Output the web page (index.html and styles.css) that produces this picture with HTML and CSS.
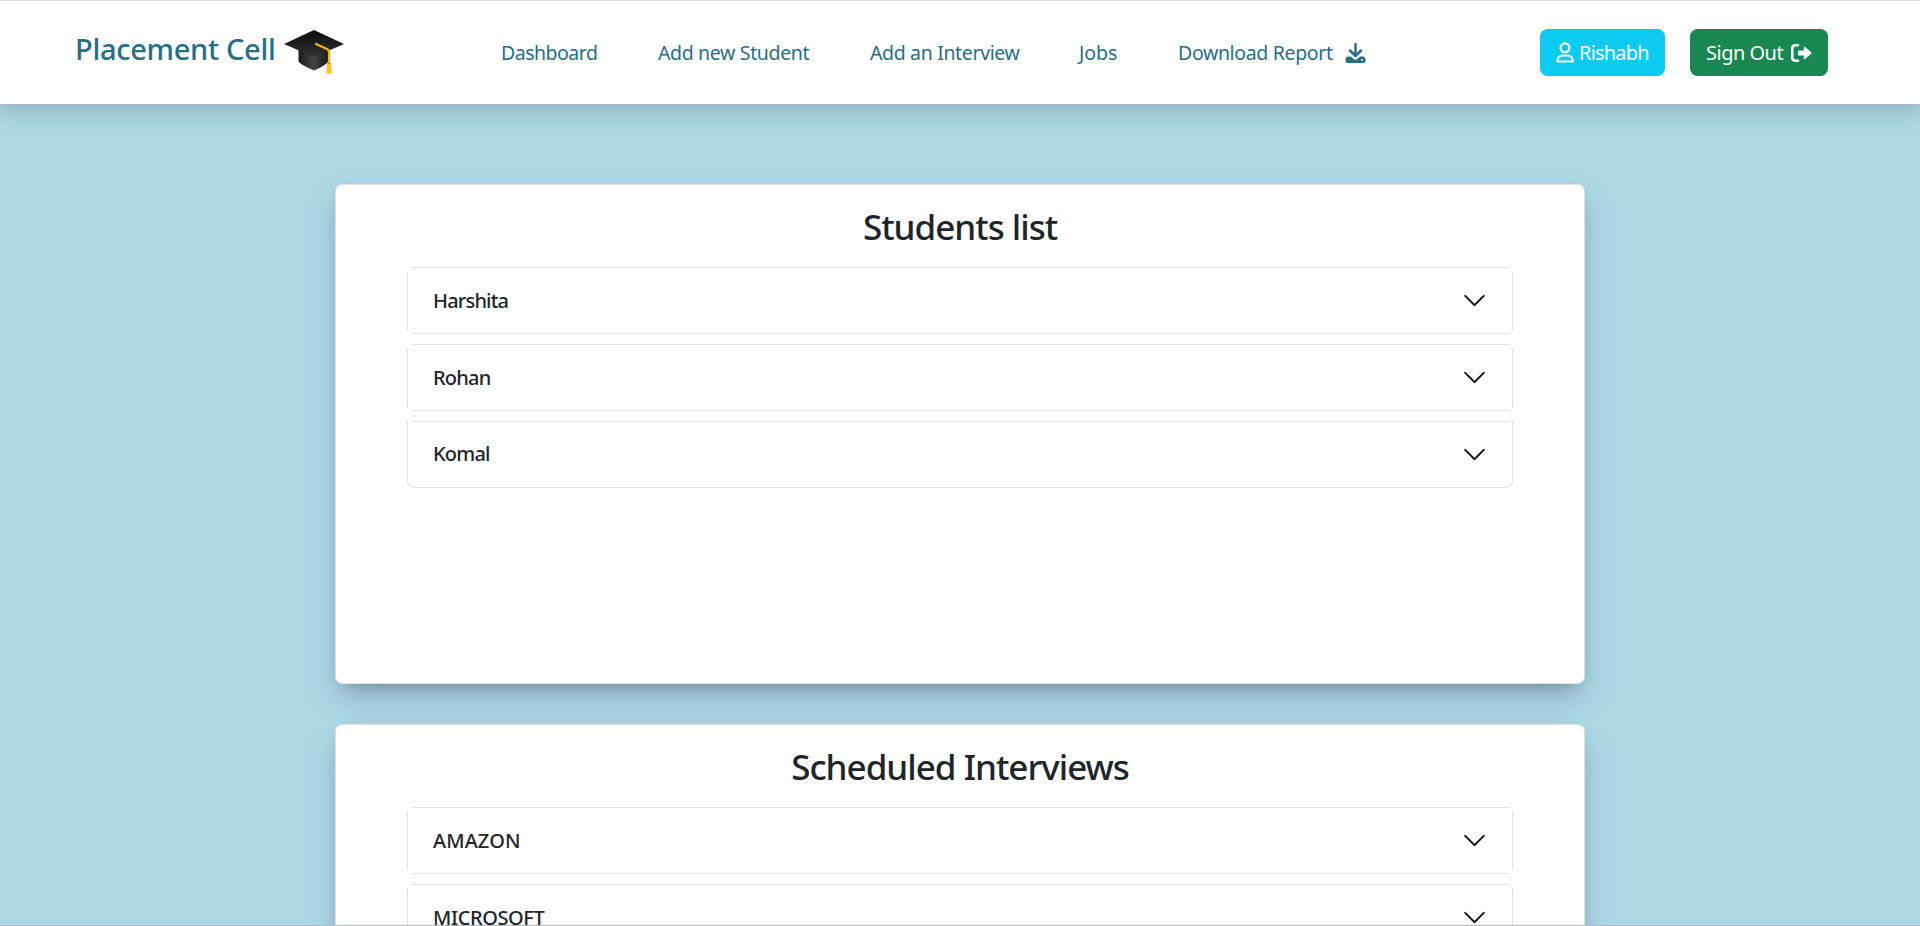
FILE: index.html
```html
<!DOCTYPE html>
<html lang="en">
<head>
<meta charset="utf-8">
<title>Placement Cell</title>
<link rel="stylesheet" href="styles.css">
</head>
<body>
<header class="navbar">
  <a class="brand"><span class="brand-name">Placement Cell</span>
    <svg class="cap" viewBox="0 0 60 45" width="60" height="45">
      <defs>
        <linearGradient id="base" x1="0" x2="1" y1="0" y2="0"><stop offset="0" stop-color="#1a1a1a"/><stop offset=".5" stop-color="#444"/><stop offset="1" stop-color="#1a1a1a"/></linearGradient>
        <linearGradient id="board" x1="0" x2="0" y1="0" y2="1"><stop offset="0" stop-color="#0c0c0c"/><stop offset="1" stop-color="#303030"/></linearGradient>
      </defs>
      <path d="M14.500 18V31Q15 34 30 40.500Q43 35 44.500 31V18Z" fill="url(#base)"/>
      <path d="M30 0L60 14L32.500 26Q30 27 27.500 26L0 14Z" fill="url(#board)"/>
      <path d="M32 14L43.500 19.200Q45 20 45 22V33" fill="none" stroke="#f4b01c" stroke-width="2.200" stroke-linecap="round"/>
      <path d="M43.500 32H46.500L47.800 43Q45 44.500 42.200 43Z" fill="#fbc21a"/>
      <path d="M43.500 33.500H46.500" stroke="#c88a10" stroke-width="1"/>
    </svg>
  </a>
  <nav class="links">
    <a class="l1">Dashboard</a><a class="l2">Add new Student</a><a class="l3">Add an Interview</a><a class="l4">Jobs</a><a class="l5">Download Report</a>
    <svg class="download" viewBox="0 0 21 20" width="21" height="20"><path d="M10.500 1.200V12M5 7.500L10.500 13L16 7.500" fill="none" stroke="#276e86" stroke-width="2.500" stroke-linecap="round" stroke-linejoin="round"/><path d="M2.500 13.500H6L8.800 16.100Q10.500 17.500 12.200 16.100L15 13.500H18.500Q20.500 14 20.500 16V17.500Q20.500 20 18 20H3Q.5 20 .5 17.500V16Q.5 14 2.500 13.500Z" fill="#276e86"/><circle cx="17" cy="17" r="1" fill="#fff"/></svg>
  </nav>
  <div class="actions">
    <a class="btn info"><svg viewBox="0 0 18 21" width="18" height="21"><circle cx="9" cy="5.800" r="4.400" fill="none" stroke="#fff" stroke-width="2.200"/><path d="M1.200 19.500Q1.200 13.500 7 13.500H11Q16.800 13.500 16.800 19.500Z" fill="none" stroke="#fff" stroke-width="2.200" stroke-linejoin="round"/></svg><span>Rishabh</span></a>
    <a class="btn success"><span>Sign Out</span><svg viewBox="0 0 21 18" width="21" height="18"><path d="M7 1.300H4.500Q1.300 1.300 1.300 4.500V13.500Q1.300 16.700 4.500 16.700H7" fill="none" stroke="#fff" stroke-width="2.500" stroke-linecap="round"/><path d="M8 6.500H12.800V3.700Q13 2.200 14.400 3.200L20.200 8.200Q21 9 20.200 9.800L14.400 14.800Q13 15.800 12.800 14.300V11.500H8Q7 11.500 7 10.500V7.500Q7 6.500 8 6.500Z" fill="#fff"/></svg></a>
  </div>
</header>
<main class="content">
  <section class="card">
    <h2>Students list</h2>
    <div class="accordion">
      <div class="item"><span class="name">Harshita</span><svg class="chev" viewBox="0 0 16 16"><path d="M1.646 4.646a.5.5 0 0 1 .708 0L8 10.293l5.646-5.647a.5.5 0 0 1 .708.708l-6 6a.5.5 0 0 1-.708 0l-6-6a.5.5 0 0 1 0-.708z"/></svg></div>
      <div class="item"><span class="name">Rohan</span><svg class="chev" viewBox="0 0 16 16"><path d="M1.646 4.646a.5.5 0 0 1 .708 0L8 10.293l5.646-5.647a.5.5 0 0 1 .708.708l-6 6a.5.5 0 0 1-.708 0l-6-6a.5.5 0 0 1 0-.708z"/></svg></div>
      <div class="item last"><span class="name">Komal</span><svg class="chev" viewBox="0 0 16 16"><path d="M1.646 4.646a.5.5 0 0 1 .708 0L8 10.293l5.646-5.647a.5.5 0 0 1 .708.708l-6 6a.5.5 0 0 1-.708 0l-6-6a.5.5 0 0 1 0-.708z"/></svg></div>
    </div>
  </section>
  <section class="card">
    <h2>Scheduled Interviews</h2>
    <div class="accordion">
      <div class="item"><span class="company">AMAZON</span><svg class="chev" viewBox="0 0 16 16"><path d="M1.646 4.646a.5.5 0 0 1 .708 0L8 10.293l5.646-5.647a.5.5 0 0 1 .708.708l-6 6a.5.5 0 0 1-.708 0l-6-6a.5.5 0 0 1 0-.708z"/></svg></div>
      <div class="item"><span class="company long">MICROSOFT</span><svg class="chev" viewBox="0 0 16 16"><path d="M1.646 4.646a.5.5 0 0 1 .708 0L8 10.293l5.646-5.647a.5.5 0 0 1 .708.708l-6 6a.5.5 0 0 1-.708 0l-6-6a.5.5 0 0 1 0-.708z"/></svg></div>
    </div>
  </section>
</main>
</body>
</html>
```
FILE: styles.css
```css
* { box-sizing: border-box; }
html { height: 100%; overflow: hidden; }
body {
  margin: 0;
  height: 100%;
  overflow: hidden;
  display: flex;
  flex-direction: column;
  border-top: 1px solid #d9d9d9;
  border-bottom: 1px solid #b3b7bb;
  background: #add8e6;
  font-family: "Noto Sans", "Open Sans", sans-serif;
  font-size: 20px;
  line-height: 30px;
  color: #212529;
}
.navbar {
  position: relative;
  z-index: 1;
  height: 103px;
  flex: none;
  display: flex;
  align-items: center;
  background: #fff;
  color: #276e86;
  padding: 0 92px 0 75px;
  box-shadow: 0 10px 20px rgba(0, 0, 0, .15);
}
.brand { display: flex; align-items: center; width: 426px; flex: none; }
.brand-name { font-size: 29px; font-weight: 500; letter-spacing: -.3px; width: 209px; white-space: nowrap; padding-bottom: 7px; }
.links { display: flex; align-items: center; flex: 1; white-space: nowrap; letter-spacing: -.35px; }
.links a { flex: none; font-size: 19.5px; }
.links .l1 { width: 157px; letter-spacing: -.5px; }
.l2 { width: 212px; }
.l3 { width: 209px; }
.links .l4 { width: 99px; letter-spacing: 0; }
.l5 { width: 168px; }
.download { margin-left: -1px; }
.actions { display: flex; gap: 25px; }
.btn { display: flex; align-items: center; height: 47px; border-radius: 7.5px; color: #fff; white-space: nowrap; letter-spacing: -.5px; }
.btn.info { width: 125px; background: #0dcaf0; padding-left: 16px; gap: 5px; letter-spacing: -.8px; }
.btn.success { width: 138px; background: #198754; padding: 0 16px; justify-content: space-between; }
.content {
  flex: 1;
  min-height: 0;
  overflow: hidden;
  display: flex;
  flex-direction: column;
  align-items: center;
  gap: 40px;
  padding-top: 80px;
}
.card {
  width: 1250px;
  height: 500px;
  flex: none;
  background: #fff;
  border: 1px solid #dee2e6;
  border-radius: 7.5px;
  padding: 20px 71px;
  box-shadow: 0 16px 34px -6px rgba(50, 50, 93, .25), 0 10px 20px -10px rgba(0, 0, 0, .3);
}
h2 { margin: 0 0 19px; font-size: 35px; line-height: 43px; font-weight: 500; text-align: center; white-space: nowrap; letter-spacing: -1px; }
.accordion { display: flex; flex-direction: column; gap: 10px; }
/* Edge lines stop short of the corners */
.item {
  height: 67px;
  display: flex;
  align-items: center;
  justify-content: space-between;
  padding: 0 26px;
  font-weight: 500;
  background:
    linear-gradient(#dee2e6, #dee2e6) center top / calc(100% - 9px) 1px no-repeat,
    linear-gradient(#dee2e6, #dee2e6) center bottom / calc(100% - 9px) 1px no-repeat,
    linear-gradient(#dee2e6, #dee2e6) left center / 1px calc(100% - 9px) no-repeat,
    linear-gradient(#dee2e6, #dee2e6) right center / 1px calc(100% - 9px) no-repeat;
}
.item.last {
  border: solid #dee2e6;
  border-width: 0 1px 1px;
  border-radius: 0 0 7px 7px;
  padding: 0 25px;
  background: linear-gradient(#dee2e6, #dee2e6) center top / calc(100% - 7px) 1px no-repeat;
}
.name { letter-spacing: -.8px; }
.company { letter-spacing: .1px; }
.company.long { letter-spacing: -.4px; }
.chev { width: 25px; height: 25px; fill: #000; stroke: #000; stroke-width: .2; }
```
